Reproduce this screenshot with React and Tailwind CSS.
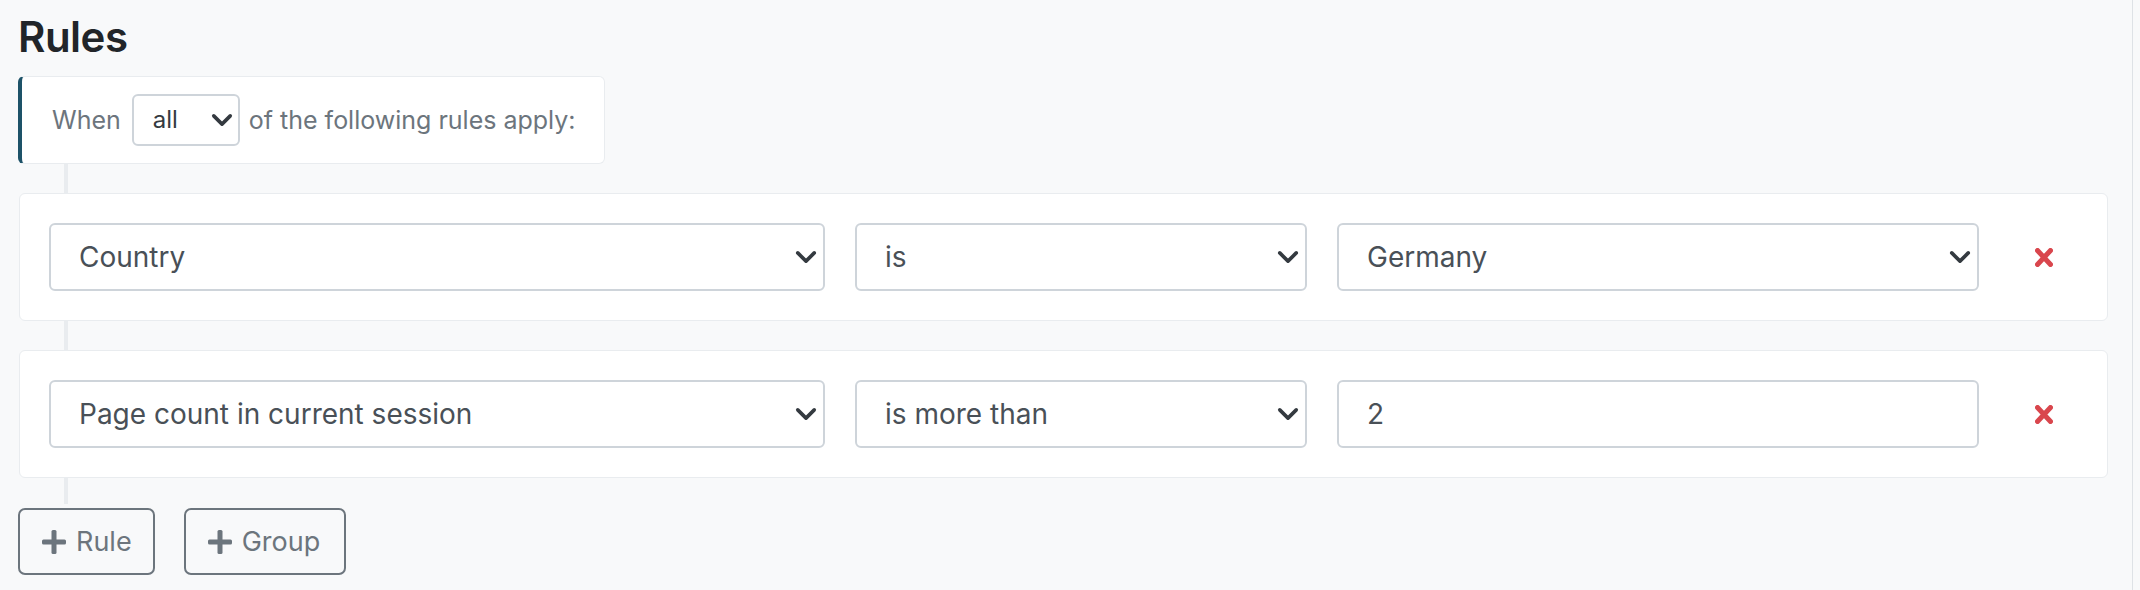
import { Fragment } from "react";

const rules = [
  { field: "Country", op: "is", value: "Germany", kind: "select" },
  { field: "Page count in current session", op: "is more than", value: "2", kind: "input" },
];

function Chevron() {
  return (
    <svg viewBox="0 0 16 16" className="w-[22px] h-[22px] shrink-0" fill="none">
      <path d="m2 5 6 6 6-6" stroke="#343a40" strokeWidth="2.6" strokeLinecap="round" strokeLinejoin="round" />
    </svg>
  );
}

function Plus() {
  return (
    <svg viewBox="0 0 24 24" className="w-[24px] h-[24px] shrink-0" fill="#6c757d">
      <rect x="9.5" y="0" width="5" height="24" rx="1.5" />
      <rect x="0" y="9.5" width="24" height="5" rx="1.5" />
    </svg>
  );
}

function Times() {
  return (
    <svg viewBox="0 0 18 19" className="w-[18px] h-[19px]" fill="none">
      <path d="M2.5 2.5 15.5 16.5M15.5 2.5 2.5 16.5" stroke="#d9464d" strokeWidth="5" strokeLinecap="round" />
    </svg>
  );
}

function FakeSelect({ children }) {
  return (
    <div className="h-[68px] flex items-center justify-between bg-white border-2 border-[#ced4da] rounded-[6px] pl-[28px] pr-[6px] text-[28px] text-[#495057]">
      <span>{children}</span>
      <Chevron />
    </div>
  );
}

export default function App() {
  return (
    <div className="min-h-screen bg-[#f8f9fa] font-[Inter,sans-serif] flex">
      <div className="flex-1 pl-[18px] pr-[24px] border-r border-[#dee2e6]">
        <h2 className="pt-[12px] text-[42px] leading-[1.2] font-semibold text-[#212529] tracking-[-0.5px]">Rules</h2>

        {/* group header */}
        <div className="mt-[14px] w-fit flex items-center bg-white border border-[#e9ecef] border-l-4 border-l-[#1d5268] rounded-[6px] pl-[30px] pr-[28px] py-[17px] text-[25px] text-[#6c757d]">
          <span>When</span>
          <div className="ml-[11px] mr-[9px] w-[108px] h-[52px] flex items-center justify-between border-2 border-[#ced4da] rounded-[6px] pl-[19px] pr-[5px] text-[24px] text-[#343a40]">
            <span>all</span>
            <Chevron />
          </div>
          <span>of the following rules apply:</span>
        </div>

        {rules.map((r) => (
          <Fragment key={r.field}>
            <div className="ml-[46px] w-[4px] h-[29px] bg-[#e9ecef]" />
            <div className="ml-px bg-white border border-[#e9ecef] rounded-[6px] p-[29px] grid grid-cols-[776px_452px_642px_1fr] gap-[30px] items-center">
              <FakeSelect>{r.field}</FakeSelect>
              <FakeSelect>{r.op}</FakeSelect>
              {r.kind === "select" ? (
                <FakeSelect>{r.value}</FakeSelect>
              ) : (
                <input
                  readOnly
                  defaultValue={r.value}
                  className="h-[68px] bg-white border-2 border-[#ced4da] rounded-[6px] pl-[28px] text-[28px] text-[#495057] outline-none"
                />
              )}
              <button className="flex justify-center">
                <Times />
              </button>
            </div>
          </Fragment>
        ))}
        <div className="ml-[46px] w-[4px] h-[26px] bg-[#e9ecef]" />

        <div className="mt-[4px] flex gap-[29px]">
          <button className="h-[67px] flex items-center gap-[10px] border-2 border-[#6c757d] rounded-[7px] pl-[22px] pr-[21px] text-[27px] text-[#6c757d]">
            <Plus />
            <span>Rule</span>
          </button>
          <button className="h-[67px] flex items-center gap-[10px] border-2 border-[#6c757d] rounded-[7px] pl-[22px] pr-[24px] text-[27px] text-[#6c757d]">
            <Plus />
            <span>Group</span>
          </button>
        </div>
      </div>
      <div className="w-[7px] bg-[#f8f9fa]" />
    </div>
  );
}
